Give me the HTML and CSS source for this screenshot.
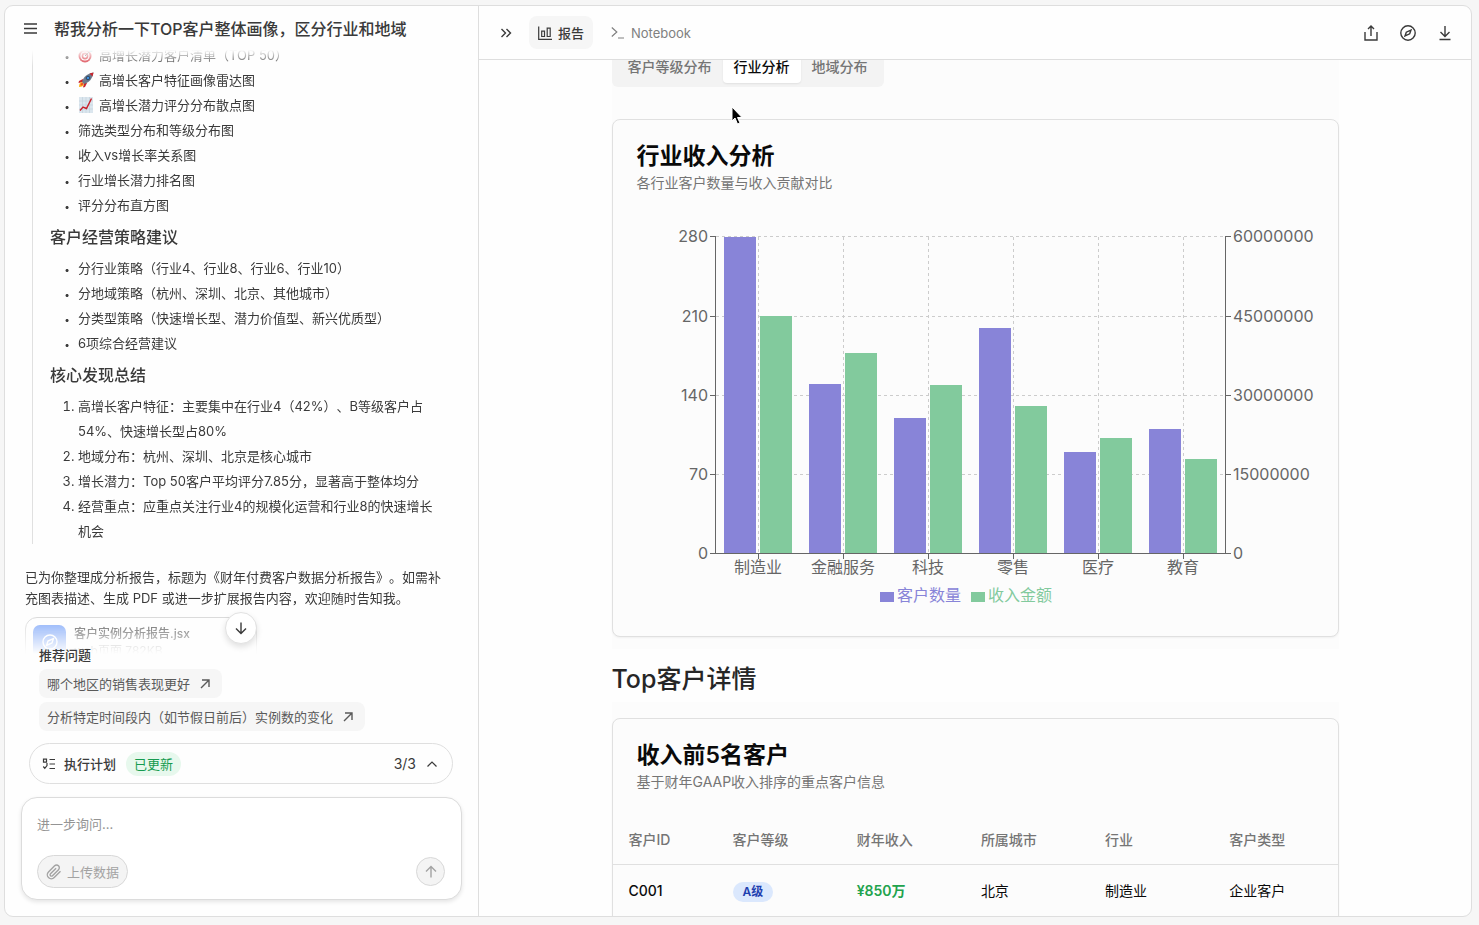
FILE: index.html
```html
<!DOCTYPE html>
<html lang="zh-CN">
<head>
    <meta charset="UTF-8">
    <meta name="viewport" content="width=device-width, initial-scale=1.0">
    <title>TOP客户整体画像分析</title>
    <link rel="stylesheet" href="styles.css">
</head>
<body>

    <div class="app">
        <aside class="chat">
            <header class="chat-header">
                <button class="icon-btn" aria-label="菜单">
                    <svg width="16" height="16" viewBox="0 0 16 16"><path d="M1 3h13M1 7.500h13M1 12h13"/></svg>
                </button>
                <h1>帮我分析一下TOP客户整体画像，区分行业和地域</h1>
            </header>

            <div class="log-wrap">
                <div class="log">
                    <div class="summary">
                        <ul>
                            <li>
                                <svg class="emoji" viewBox="0 0 16 16">
                                    <circle cx="7" cy="9" r="6.500" fill="#d8343f"/>
                                    <circle cx="7" cy="9" r="4.600" fill="#fff"/>
                                    <circle cx="7" cy="9" r="3.400" fill="#d8343f"/>
                                    <circle cx="7" cy="9" r="1.800" fill="#fff"/>
                                    <path d="M7 9l5-5" stroke="#444" stroke-width="1"/>
                                    <path d="M11 5V2l3-2v2h2l-2 3z" fill="#3fb1c6"/>
                                </svg>高增长潜力客户清单（TOP 50）
                            </li>
                            <li>
                                <svg class="emoji" viewBox="0 0 16 16">
                                    <path d="M5 7L1 9l-.5 2L5 10zM9 11l-2 4-2 .5L6 11z" fill="#c9252d"/>
                                    <path d="M1 15c0-3 1-4.500 3-5l2 2c-.5 2-2 3-5 3z" fill="#ffb21c"/>
                                    <path d="M2.500 13.500c0-1.500.5-2.500 2-3l1 1c-.5 1.500-1.500 2-3 2z" fill="#f0502a"/>
                                    <path d="M4 10C5.500 5 9 1.500 15.500.5 14.500 7 11 10.500 6 12z" fill="#6d7a8c"/>
                                    <path d="M11.500 1.500l4-1-1 4z" fill="#c9252d"/>
                                    <circle cx="10" cy="6" r="1.800" fill="#3c8fe0" stroke="#27384e" stroke-width=".8"/>
                                </svg>高增长客户特征画像雷达图
                            </li>
                            <li>
                                <svg class="emoji" viewBox="0 0 16 16">
                                    <rect x="1" y="0" width="14" height="16" fill="#dbe6ee"/>
                                    <path d="M1 4h14M1 8h14M1 12h14M4.500 0v16M8 0v16M11.500 0v16" stroke="#b9cad6" stroke-width=".5"/>
                                    <path d="M2 13.500l3-3.500 3.500 1.500 5-10" fill="none" stroke="#c8202a" stroke-width="1.400"/>
                                </svg>高增长潜力评分分布散点图
                            </li>
                            <li>筛选类型分布和等级分布图</li>
                            <li>收入vs增长率关系图</li>
                            <li>行业增长潜力排名图</li>
                            <li>评分分布直方图</li>
                        </ul>
                        <h2>客户经营策略建议</h2>
                        <ul>
                            <li>分行业策略（行业4、行业8、行业6、行业10）</li>
                            <li>分地域策略（杭州、深圳、北京、其他城市）</li>
                            <li>分类型策略（快速增长型、潜力价值型、新兴优质型）</li>
                            <li>6项综合经营建议</li>
                        </ul>
                        <h2>核心发现总结</h2>
                        <ol>
                            <li>高增长客户特征：主要集中在行业4（42%）、B等级客户占54%、快速增长型占80%</li>
                            <li>地域分布：杭州、深圳、北京是核心城市</li>
                            <li>增长潜力：Top 50客户平均评分7.85分，显著高于整体均分</li>
                            <li>经营重点：应重点关注行业4的规模化运营和行业8的快速增长机会</li>
                        </ol>
                    </div>

                    <p class="reply">已为你整理成分析报告，标题为《财年付费客户数据分析报告》。如需补充图表描述、生成 PDF 或进一步扩展报告内容，欢迎随时告知我。</p>

                    <a class="file" href="#">
                        <span class="file-icon">
                            <svg width="16" height="16" viewBox="0 0 16 16"><circle cx="8" cy="8" r="7"/><path d="M11.500 4.500L10 9l-5.500 2.500L6 7z"/></svg>
                        </span>
                        <span class="file-text">
                            <strong>客户实例分析报告.jsx</strong>
                            <small>web页面 782KB</small>
                        </span>
                    </a>
                </div>
                <button class="scroll-down" aria-label="滚动到底部">
                    <svg width="14" height="14" viewBox="0 0 14 14"><path d="M7 1.500v11M2 7.500l5 5 5-5"/></svg>
                </button>
            </div>

            <section class="suggestions">
                <h3>推荐问题</h3>
                <button class="chip">哪个地区的销售表现更好
                    <svg width="10" height="10" viewBox="0 0 10 10"><path d="M1 9l8-8M2 1h7v7"/></svg>
                </button>
                <button class="chip">分析特定时间段内（如节假日前后）实例数的变化
                    <svg width="10" height="10" viewBox="0 0 10 10"><path d="M1 9l8-8M2 1h7v7"/></svg>
                </button>
            </section>

            <button class="plan">
                <svg width="14" height="12" viewBox="0 0 14 12"><path d="M1.500 1.200h3v3h-3zM1.300 8.500l1.500 1.800L5 7.500V5M7.500 1.500H13M7.500 6H13M7.500 10.500H13"/></svg>
                <strong>执行计划</strong>
                <span class="updated">已更新</span>
                <span class="count">3/3</span>
                <svg width="12" height="8" viewBox="0 0 12 8"><path d="M1.500 6.500L6 2l4.500 4.500"/></svg>
            </button>

            <form class="composer">
                <textarea rows="1" placeholder="进一步询问..." aria-label="进一步询问"></textarea>
                <div class="composer-bar">
                    <button type="button" class="upload">
                        <svg width="16" height="16" viewBox="0 0 16 16"><path d="M14.500 7.300l-6.300 6.300a4 4 0 0 1-5.700-5.700L8.600 1.800a2.700 2.700 0 0 1 3.900 3.900l-6 6a1.400 1.400 0 0 1-2-2l5.600-5.500"/></svg>
                        上传数据
                    </button>
                    <button type="submit" class="send" aria-label="发送">
                        <svg width="14" height="14" viewBox="0 0 14 14"><path d="M7 12.500v-11M2 6.500l5-5 5 5"/></svg>
                    </button>
                </div>
            </form>
        </aside>

        <main class="report">
            <nav class="toolbar">
                <button class="icon-btn" aria-label="收起">
                    <svg width="12" height="12" viewBox="0 0 12 12"><path d="M1.500 2l4 4-4 4M6.500 2l4 4-4 4"/></svg>
                </button>
                <button class="view active">
                    <svg width="14" height="14" viewBox="0 0 14 14"><path d="M.7.5v12.800H14M3.700 5.200h2.800v5.300H3.700zM9.200 2.200h3v8.300h-3z"/></svg>
                    报告
                </button>
                <button class="view">
                    <svg width="14" height="14" viewBox="0 0 14 14"><path d="M.8 1.500l5 4.500-5 4.500M7 12h6"/></svg>
                    Notebook
                </button>
                <div class="actions">
                    <button class="icon-btn" aria-label="分享">
                        <svg width="16" height="16" viewBox="0 0 16 16"><path d="M2 7v8h12V7M8 11V1M5 4l3-3 3 3"/></svg>
                    </button>
                    <button class="icon-btn" aria-label="浏览">
                        <svg width="16" height="16" viewBox="0 0 16 16"><circle cx="8" cy="8" r="7.200"/><path d="M11 5L9.700 8.800 5 11l1.300-3.800z"/></svg>
                    </button>
                    <button class="icon-btn" aria-label="下载">
                        <svg width="16" height="16" viewBox="0 0 16 16"><path d="M8 1v10M3.500 7L8 11.500 12.500 7M2.500 14.500h11"/></svg>
                    </button>
                </div>
            </nav>

            <div class="scroller">
                <div class="page">
                    <section class="block block-charts">
                        <div class="tabs" role="tablist">
                            <button role="tab">客户等级分布</button>
                            <button role="tab" class="active" aria-selected="true">行业分析</button>
                            <button role="tab">地域分布</button>
                        </div>

                        <div class="card">
                            <div class="card-header">
                                <h3>行业收入分析</h3>
                                <p>各行业客户数量与收入贡献对比</p>
                            </div>
                            <svg class="chart" viewBox="0 0 677 395">
                                <g class="grid">
                                    <path d="M79 19.500H588M79 99.500H588M79 178.500H588M79 257.500H588"/>
                                    <path d="M121.500 20V336M206.500 20V336M291.500 20V336M376.500 20V336M461.500 20V336M546.500 20V336"/>
                                </g>
                                <g class="count-bars">
                                    <rect x="87" y="20" width="32" height="317"/>
                                    <rect x="172" y="167" width="32" height="170"/>
                                    <rect x="257" y="201" width="32" height="136"/>
                                    <rect x="342" y="111" width="32" height="226"/>
                                    <rect x="427" y="235" width="32" height="102"/>
                                    <rect x="512" y="212" width="32" height="125"/>
                                </g>
                                <g class="income-bars">
                                    <rect x="123" y="99" width="32" height="238"/>
                                    <rect x="208" y="136" width="32" height="201"/>
                                    <rect x="293" y="168" width="32" height="169"/>
                                    <rect x="378" y="189" width="32" height="148"/>
                                    <rect x="463" y="221" width="32" height="116"/>
                                    <rect x="548" y="242" width="32" height="95"/>
                                </g>
                                <g class="axis">
                                    <path d="M73 19.500h6M73 99.500h6M73 178.500h6M73 257.500h6M73 336.500H594M78.500 19V337M588.500 19V337"/>
                                    <path d="M588 19.500h6M588 99.500h6M588 178.500h6M588 257.500h6"/>
                                    <path d="M121.500 336v6M206.500 336v6M291.500 336v6M376.500 336v6M461.500 336v6M546.500 336v6"/>
                                </g>
                                <g class="ticks ticks-left">
                                    <text x="71" y="25">280</text>
                                    <text x="71" y="105">210</text>
                                    <text x="71" y="184">140</text>
                                    <text x="71" y="263">70</text>
                                    <text x="71" y="342">0</text>
                                </g>
                                <g class="ticks">
                                    <text x="596" y="25">60000000</text>
                                    <text x="596" y="105">45000000</text>
                                    <text x="596" y="184">30000000</text>
                                    <text x="596" y="263">15000000</text>
                                    <text x="596" y="342">0</text>
                                </g>
                                <g class="ticks ticks-bottom">
                                    <text x="121" y="356">制造业</text>
                                    <text x="206" y="356">金融服务</text>
                                    <text x="291" y="356">科技</text>
                                    <text x="376" y="356">零售</text>
                                    <text x="461" y="356">医疗</text>
                                    <text x="546" y="356">教育</text>
                                </g>
                                <g class="legend count-bars">
                                    <rect x="243" y="375" width="14" height="10"/>
                                    <text x="260" y="384">客户数量</text>
                                </g>
                                <g class="legend income-bars">
                                    <rect x="334" y="375" width="14" height="10"/>
                                    <text x="351" y="384">收入金额</text>
                                </g>
                            </svg>
                        </div>
                    </section>

                    <h2 class="section-title">Top客户详情</h2>

                    <section class="block">
                        <div class="card">
                            <div class="card-header">
                                <h3>收入前5名客户</h3>
                                <p>基于财年GAAP收入排序的重点客户信息</p>
                            </div>
                            <table>
                                <thead>
                                    <tr>
                                        <th>客户ID</th>
                                        <th>客户等级</th>
                                        <th>财年收入</th>
                                        <th>所属城市</th>
                                        <th>行业</th>
                                        <th>客户类型</th>
                                    </tr>
                                </thead>
                                <tbody>
                                    <tr>
                                        <td class="id">C001</td>
                                        <td><span class="level">A级</span></td>
                                        <td class="money">¥850万</td>
                                        <td>北京</td>
                                        <td>制造业</td>
                                        <td>企业客户</td>
                                    </tr>
                                </tbody>
                            </table>
                        </div>
                    </section>
                </div>
            </div>
        </main>
    </div>

    <svg class="cursor" width="12" height="20" viewBox="0 0 12 20"><path d="M1 1v14l3-3 2.500 6 2.500-1-2.500-5.500H11z"/></svg>

</body>
</html>
```
FILE: styles.css
```css
* {
    box-sizing: border-box;
}
body {
    font-family: Inter, "Noto Sans CJK SC", sans-serif;
    font-size: 13px;
    text-spacing-trim: space-all;
    margin: 0;
    height: 100vh;
    padding: 5px 7px 8px 4px;
    background-color: #f6f6f6;
    color: #3a3a3a;
}
h1, h2, h3, p, ul, ol {
    margin: 0;
    padding: 0;
}
button {
    font: inherit;
    color: inherit;
    border: 0;
    padding: 0;
    background: none;
    cursor: pointer;
}
svg {
    display: block;
    flex: none;
    fill: none;
    stroke: currentColor;
    stroke-width: 1.4;
}
.app {
    display: grid;
    grid-template-columns: 474px 1fr;
    height: 100%;
    background-color: #fefefe;
    border: 1px solid #dedede;
    border-radius: 9px;
    overflow: hidden;
}

/* chat panel */
.chat {
    display: flex;
    flex-direction: column;
    min-height: 0;
    border-right: 1px solid #dedede;
}
.chat-header {
    display: flex;
    align-items: center;
    gap: 15px;
    height: 44px;
    padding: 2px 18px 0;
}
.chat-header h1 {
    font-size: 16px;
    font-weight: 500;
    line-height: 24px;
}
.log-wrap {
    position: relative;
    flex: 1;
    min-height: 0;
}
.log {
    height: 100%;
    overflow: hidden;
    padding: 0 28px 0 20px;
    -webkit-mask-image: linear-gradient(transparent, #000 16px, #000 calc(100% - 44px), transparent);
    mask-image: linear-gradient(transparent, #000 16px, #000 calc(100% - 44px), transparent);
}
.summary {
    margin: -7px 0 28px 7px;
    padding-left: 17px;
    border-left: 1px solid #e0e0e0;
}
.summary ul, .summary ol {
    padding: 0 8px 0 28px;
    line-height: 25px;
}
.summary ul {
    list-style-type: "•\00a0\00a0\00a0";
}
.summary ul li::marker {
    font-size: 10px;
}
.summary ol {
    margin-bottom: -5px;
}
.summary h2 {
    font-size: 16px;
    font-weight: 500;
    line-height: 24px;
    padding: 7px 0;
}
.emoji {
    display: inline-block;
    width: 16px;
    height: 16px;
    margin-right: 5px;
    vertical-align: -3px;
    stroke: none;
}
.reply {
    line-height: 21px;
    margin-bottom: 8px;
}
.file {
    display: flex;
    gap: 8px;
    width: 232px;
    height: 56px;
    padding: 7px;
    border: 1px solid #d4d4d4;
    border-radius: 12px;
    color: inherit;
    text-decoration: none;
}
.file-icon {
    display: grid;
    place-items: center;
    width: 33px;
    height: 33px;
    border-radius: 7px;
    background-color: #6f9cf8;
    color: #fff;
}
.file-text strong, .file-text small {
    display: block;
    font-size: 12px;
    line-height: 17px;
}
.file-text strong {
    font-weight: 500;
}
.file-text small {
    color: #888;
}
.scroll-down {
    position: absolute;
    left: 50%;
    bottom: 10px;
    display: grid;
    place-items: center;
    width: 32px;
    height: 32px;
    margin-left: -17px;
    border: 1px solid #e2e2e2;
    border-radius: 50%;
    background-color: #fff;
    box-shadow: 0 3px 6px rgba(0, 0, 0, 0.12);
}
.suggestions {
    position: relative;
    display: flex;
    flex-direction: column;
    align-items: flex-start;
    gap: 4px;
    margin: -8px 16px 12px 34px;
}
.suggestions h3 {
    font-size: 13px;
    font-weight: 500;
    line-height: 19px;
}
.chip {
    display: flex;
    align-items: center;
    gap: 10px;
    height: 29px;
    padding: 0 12px 0 8px;
    border-radius: 8px;
    background-color: #f6f6f6;
    color: #5a5a5a;
}
.plan {
    display: flex;
    align-items: center;
    height: 41px;
    margin: 0 25px 13px 24px;
    padding: 0 14px 0 12px;
    border: 1px solid #dfdfdf;
    border-radius: 21px;
}
.plan svg {
    stroke-width: 1.2;
}
.plan strong {
    margin: 0 10px 0 8px;
    font-weight: 500;
}
.updated {
    padding: 0 8px;
    border-radius: 12px;
    background-color: #e7f8ed;
    color: #169b50;
    line-height: 24px;
}
.count {
    margin: 0 10px 0 auto;
    font-size: 14px;
}
.composer {
    display: flex;
    flex-direction: column;
    justify-content: space-between;
    height: 103px;
    margin: 0 16px 16px;
    padding: 16px 16px 11px 15px;
    border: 1px solid #dcdcdc;
    border-radius: 16px;
    background-color: #fff;
    box-shadow: 0 2px 4px rgba(0, 0, 0, 0.1);
}
.composer textarea {
    padding: 0;
    border: 0;
    outline: 0;
    resize: none;
    font: inherit;
    line-height: 20px;
    background: none;
}
.composer textarea::placeholder {
    color: #949494;
}
.composer-bar {
    display: flex;
    align-items: center;
    justify-content: space-between;
}
.upload, .send {
    display: flex;
    align-items: center;
    justify-content: center;
    border: 1px solid #d8d8d8;
    background-color: #f4f4f4;
    color: #a3a3a3;
}
.upload {
    gap: 5px;
    height: 33px;
    padding: 0 8px;
    border-radius: 17px;
}
.send {
    width: 29px;
    height: 29px;
    border-radius: 50%;
}

/* report panel */
.report {
    display: flex;
    flex-direction: column;
    min-width: 0;
    min-height: 0;
}
.toolbar {
    display: flex;
    align-items: center;
    height: 54px;
    padding: 0 18px 0 21px;
    border-bottom: 1px solid #dedede;
}
.view {
    display: flex;
    align-items: center;
    gap: 6px;
    height: 33px;
    margin-left: 9px;
    padding: 0 9px;
    border-radius: 8px;
    color: #808080;
}
.view svg {
    stroke-width: 1.2;
}
.view.active {
    margin-left: 17px;
    background-color: #f6f6f6;
    color: #3a3a3a;
    font-weight: 500;
}
.actions {
    display: flex;
    gap: 21px;
    margin-left: auto;
}
.scroller {
    flex: 1;
    min-height: 0;
    overflow: hidden;
}
.page {
    max-width: 727px;
    margin: 0 auto;
}
.block {
    padding-top: 16px;
    background-color: #fcfcfc;
}
.block-charts {
    margin-top: -13px;
    padding: 0 0 12px;
}
.tabs {
    display: inline-flex;
    margin-bottom: 32px;
    padding: 4px 5px;
    border-radius: 6px;
    background-color: #f3f3f3;
    vertical-align: top;
}
.tabs button {
    padding: 6px 11px;
    border-radius: 4px;
    font-size: 14px;
    font-weight: 500;
    line-height: 20px;
    color: #757575;
}
.tabs .active {
    background-color: #fff;
    color: #0a0a0a;
    box-shadow: 0 1px 2px rgba(0, 0, 0, 0.08);
}
.card {
    border: 1px solid #e0e0e0;
    border-radius: 8px;
    background-color: #fcfcfc;
    box-shadow: 0 1px 2px rgba(0, 0, 0, 0.05);
    padding-bottom: 24px;
}
.card-header {
    padding: 24px;
}
.card-header h3 {
    font-size: 23px;
    font-weight: 600;
    line-height: 24px;
    color: #0a0a0a;
}
.card-header p {
    margin-top: 5px;
    font-size: 14px;
    line-height: 20px;
    color: #757575;
}
.chart {
    width: calc(100% - 48px);
    margin: 0 24px;
    stroke: none;
}
.grid {
    stroke: #ccc;
    stroke-width: 1;
    stroke-dasharray: 3 3;
}
.axis {
    stroke: #666;
    stroke-width: 1;
}
.count-bars {
    fill: #8884d8;
}
.income-bars {
    fill: #82ca9d;
}
.ticks, .legend {
    font-size: 16px;
}
.ticks {
    fill: #666;
}
.ticks-left {
    text-anchor: end;
}
.ticks-bottom {
    text-anchor: middle;
}
.section-title {
    padding: 15px 0 8px;
    font-size: 25px;
    font-weight: 500;
    line-height: 30px;
    color: #262626;
}
table {
    width: 100%;
    border-collapse: collapse;
    table-layout: fixed;
    font-size: 14px;
    line-height: 20px;
    color: #0a0a0a;
}
th, td {
    padding: 0 16px;
    text-align: left;
    border-bottom: 1px solid #e0e0e0;
}
th {
    height: 48px;
    font-weight: 500;
    color: #757575;
}
th:first-child {
    width: 104px;
    white-space: nowrap;
}
td {
    height: 54px;
}
.id {
    font-weight: 500;
}
.money {
    font-weight: 600;
    color: #22a34d;
}
.level {
    display: inline-block;
    padding: 0 10px;
    border-radius: 10px;
    background-color: #dbe8fd;
    color: #1e40af;
    font-size: 12px;
    font-weight: 600;
}
.cursor {
    position: absolute;
    left: 731px;
    top: 106px;
    fill: #000;
    stroke: #fff;
    stroke-width: 1;
}
```
